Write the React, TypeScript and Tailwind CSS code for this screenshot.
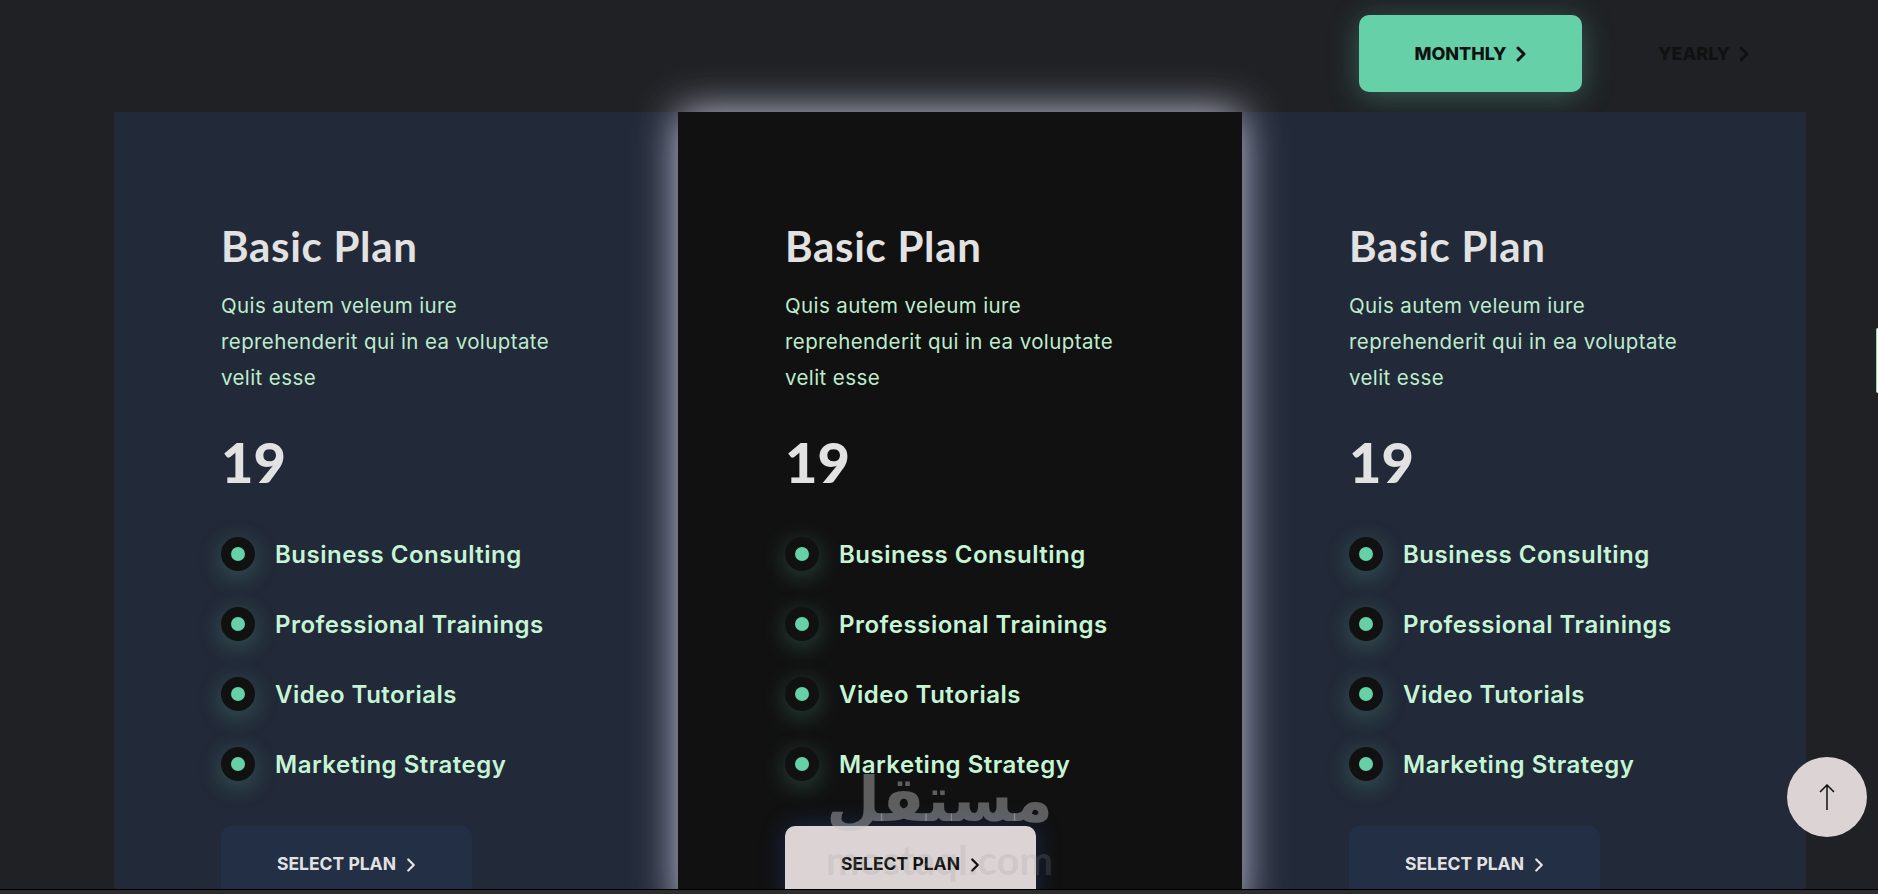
import { ChevronRight } from 'lucide-react'

const features = ['Business Consulting', 'Professional Trainings', 'Video Tutorials', 'Marketing Strategy']

function PlanCard({ featured }: { featured?: boolean }) {
  return (
    <div className={`h-[800px] pl-[107px] pt-[110px] ${featured ? 'relative z-10 bg-[#111111] shadow-[0_0_40px_rgba(205,208,230,0.95)]' : 'bg-[#222938]'}`}>
      <h3 className="font-['Lato',sans-serif] text-[42px] leading-[48px] font-bold tracking-[0.7px] text-[#e2e2e2]">Basic Plan</h3>
      <p className="mt-[18px] w-[345px] font-['Inter',sans-serif] text-[20.5px] leading-[36px] tracking-[0.4px] text-[#bdeccd]">
        Quis autem veleum iure reprehenderit qui in ea voluptate velit esse
      </p>
      <div className="mt-[32px] font-['Lato',sans-serif] text-[56px] leading-[68px] font-black text-[#e2e2e2]">19</div>
      <ul className="mt-[42px] flex flex-col gap-[36px]">
        {features.map((feature) => (
          <li key={feature} className="flex h-[34px] items-center gap-[20px]">
            <span className="mb-[2px] flex h-[34px] w-[34px] items-center justify-center rounded-full bg-[#111111] shadow-[0_5px_25px_rgba(102,209,169,0.3)]">
              <span className="h-[14px] w-[14px] rounded-full bg-[#66d1a9]" />
            </span>
            <span className="font-['Inter',sans-serif] text-[24px] font-semibold tracking-[0.5px] text-[#c6f5d6]">{feature}</span>
          </li>
        ))}
      </ul>
      <button
        className={`mt-[44px] flex h-[77px] w-[251px] items-center gap-[4px] rounded-[10px] pl-[56px] font-['Inter',sans-serif] text-[17.5px] font-bold ${
          featured ? 'bg-[#dcd4d4] text-[#111111] shadow-[0_0_24px_rgba(40,70,150,0.45)]' : 'bg-[#232f45] text-[#e2e2e2]'
        }`}
      >
        SELECT PLAN
        <ChevronRight size={22} strokeWidth={2.5} />
      </button>
    </div>
  )
}

function App() {
  return (
    <div className="relative flex h-screen flex-col overflow-hidden bg-[#1f2125]">
      <main className="min-h-0 flex-1 overflow-hidden">
        <div className="flex h-[112px] items-start justify-end gap-[76px] pt-[15px] pr-[122px] font-['Inter',sans-serif] text-[18px] font-extrabold">
          <button className="flex h-[77px] w-[223px] items-center justify-center gap-[2px] rounded-[10px] bg-[#66d1a9] pl-[6px] text-[#111111] shadow-[0_4px_30px_rgba(102,209,169,0.35)]">
            MONTHLY
            <ChevronRight size={24} strokeWidth={3} />
          </button>
          <button className="flex h-[77px] items-center gap-[2px] text-[#111111]">
            YEARLY
            <ChevronRight size={24} strokeWidth={3} />
          </button>
        </div>
        <div className="ml-[114px] mr-[72px] grid grid-cols-3">
          <PlanCard />
          <PlanCard featured />
          <PlanCard />
        </div>
      </main>
      <div className="h-[5px] shrink-0 border-t border-black bg-[#2d2d2d]" />

      {/* mostaql watermark */}
      <div className="pointer-events-none absolute top-[756px] left-[827px] z-20 flex w-[225px] flex-col items-center text-[rgba(194,194,194,0.44)]">
        <span dir="rtl" className="font-['DejaVu_Sans',sans-serif] text-[62px] leading-[88px] font-bold">مستقل</span>
        <span className="font-['Lato',sans-serif] text-[40px] leading-[32px] font-bold text-[rgba(150,150,150,0.2)]">mostaql.com</span>
      </div>

      <div className="absolute top-[328px] right-0 z-20 h-[65px] w-[2px] rounded-l-md border-l border-[#8fdca0] bg-white" />
      <button className="absolute top-[757px] right-[11px] z-20 flex h-[80px] w-[80px] items-center justify-center rounded-full bg-[#dcd4d4] text-[#111111]">
        <svg width="16" height="26" viewBox="0 0 16 26" fill="none" stroke="currentColor" strokeWidth="1.5">
          <path d="M8 26V1M1 8l7-7 7 7" />
        </svg>
      </button>
    </div>
  )
}

export default App
